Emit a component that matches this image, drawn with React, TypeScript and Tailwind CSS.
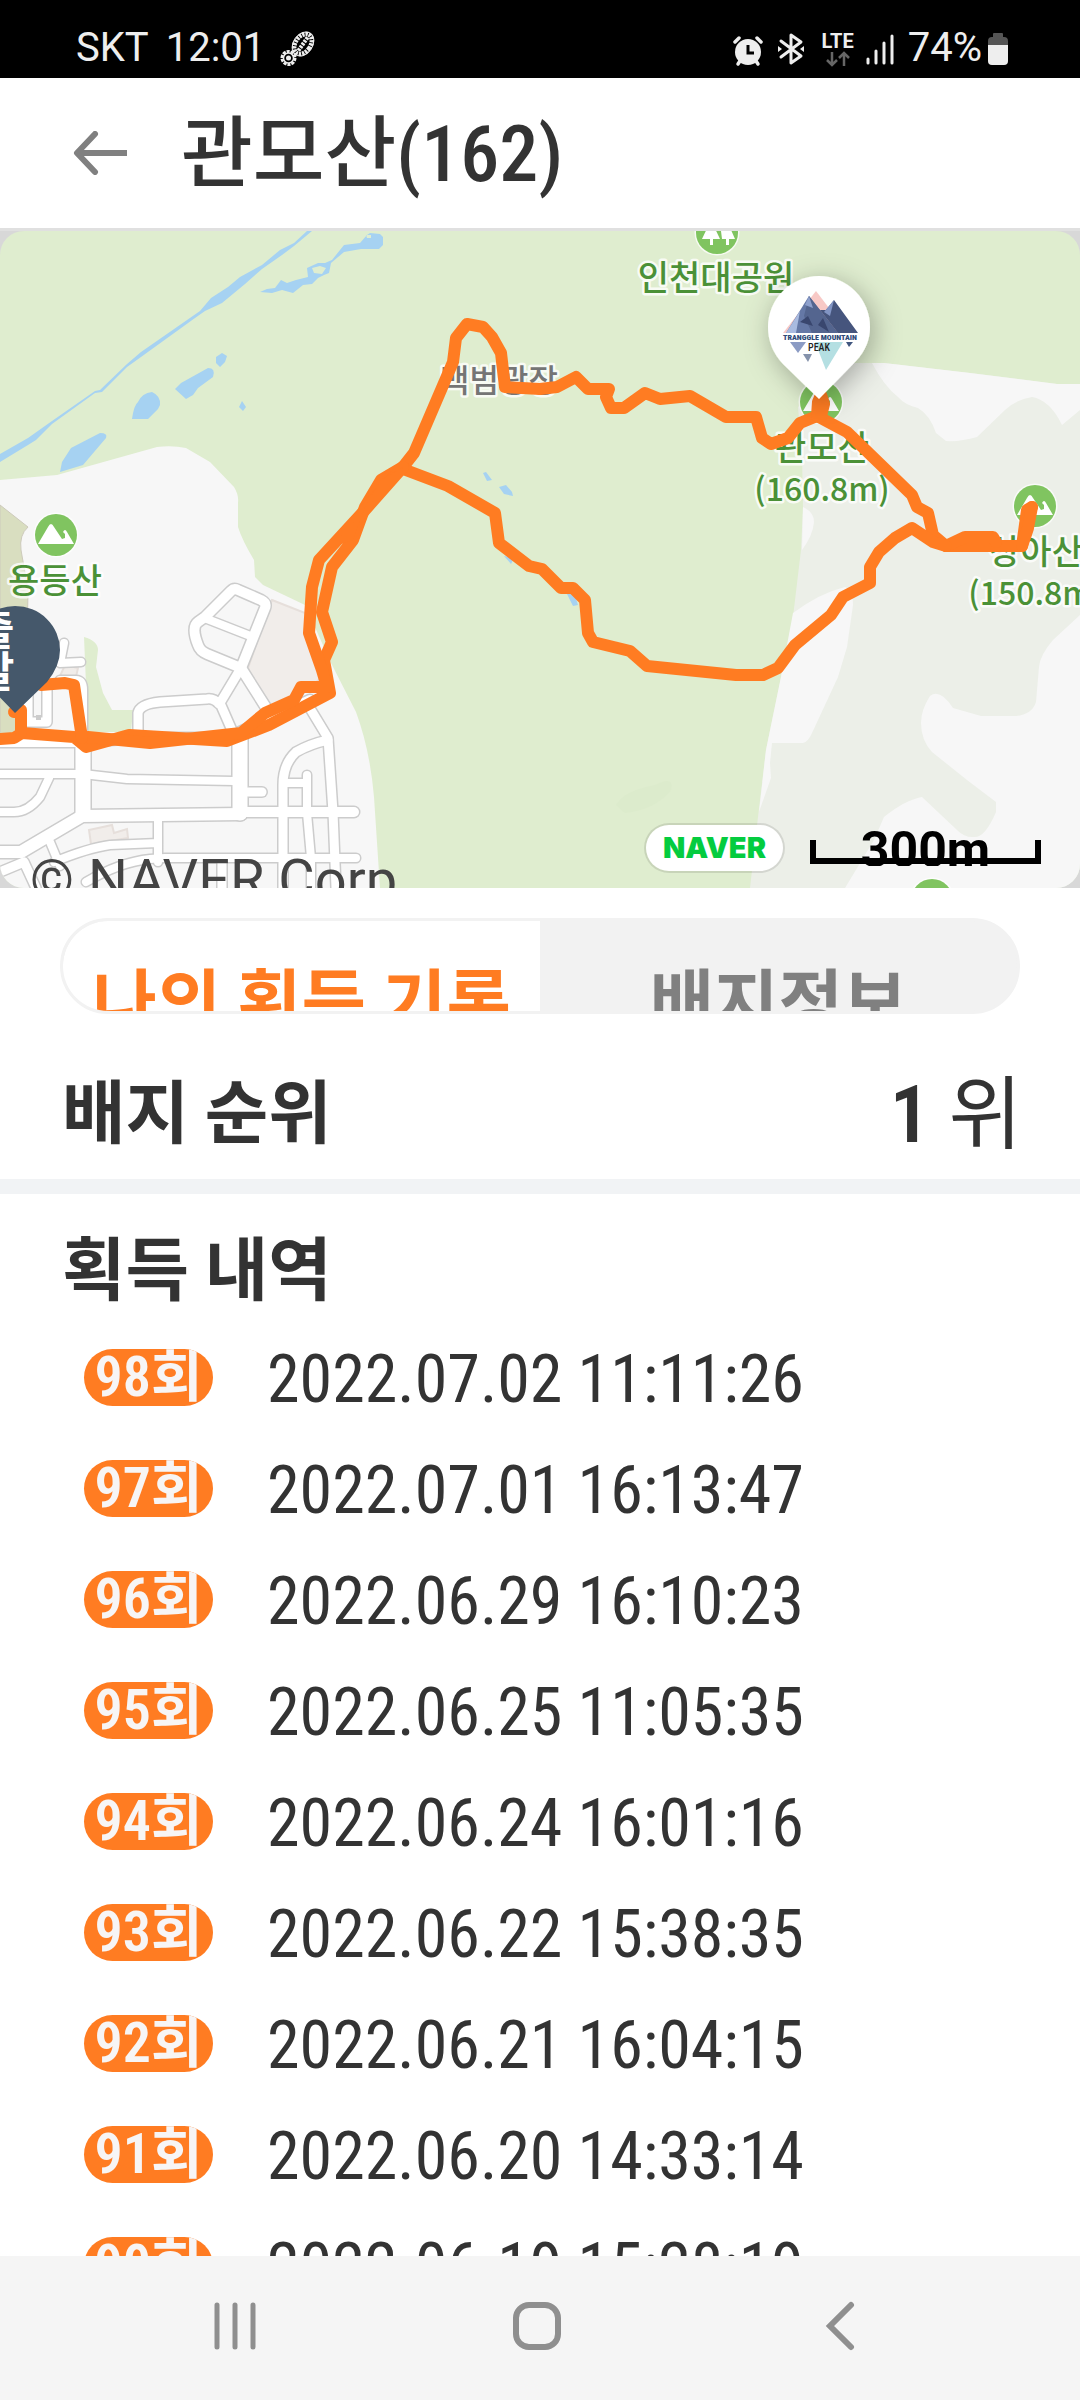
import type { ReactNode } from 'react';

const ORANGE = '#ff7c22';

const records = [
  { count: 98, date: '2022.07.02 11:11:26' },
  { count: 97, date: '2022.07.01 16:13:47' },
  { count: 96, date: '2022.06.29 16:10:23' },
  { count: 95, date: '2022.06.25 11:05:35' },
  { count: 94, date: '2022.06.24 16:01:16' },
  { count: 93, date: '2022.06.22 15:38:35' },
  { count: 92, date: '2022.06.21 16:04:15' },
  { count: 91, date: '2022.06.20 14:33:14' },
  { count: 90, date: '2022.06.19 15:28:19' },
];

function FootprintIcon() {
  return (
    <svg viewBox="0 0 36 36" className="h-9 w-9" aria-hidden="true">
      <g transform="rotate(35 23 13)" fill="none" stroke="#eee">
        <ellipse cx="23" cy="13" rx="7.5" ry="11" strokeWidth="4.5" strokeDasharray="2.4 0.9" />
        <ellipse cx="23" cy="13" rx="9.6" ry="13" strokeWidth="1" />
        <path d="M23 5v17" strokeWidth="4" strokeDasharray="2.4 1" />
      </g>
      <circle cx="8.500" cy="27" r="6.500" fill="none" stroke="#eee" strokeWidth="3" strokeDasharray="3 1" />
      <circle cx="8.500" cy="27" r="5" fill="none" stroke="#eee" strokeWidth="1.500" />
      <circle cx="8.500" cy="27" r="2.500" fill="#eee" />
    </svg>
  );
}

function AlarmIcon() {
  return (
    <svg viewBox="0 0 30 32" className="h-8 w-[30px]" aria-hidden="true">
      <g stroke="#eee" strokeLinecap="round" strokeWidth="3.500">
        <path d="M2 7l4-4M28 7l-4-4" />
        <path d="M5 29l2-3M25 29l-2-3" />
      </g>
      <circle cx="15" cy="17" r="13" fill="#eee" />
      <path d="M15 10v8h6" fill="none" stroke="#000" strokeWidth="3" />
    </svg>
  );
}

function BluetoothIcon() {
  return (
    <svg viewBox="0 0 28 34" className="h-[34px] w-7" aria-hidden="true">
      <path
        d="M4 9l20 15-10 7V3l10 7L4 25"
        fill="none"
        stroke="#eee"
        strokeWidth="3"
        strokeLinejoin="round"
        strokeLinecap="round"
      />
      <path d="M1 14v6l4-3zM27 14v6l-4-3z" fill="#eee" />
    </svg>
  );
}

function SignalIcon() {
  return (
    <svg viewBox="0 0 28 32" className="h-8 w-7" aria-hidden="true">
      <path d="M2 26v4M10 18v12M18 10v20M26 3v27" stroke="#eee" strokeWidth="3" strokeLinecap="round" />
    </svg>
  );
}

function BatteryIcon() {
  return (
    <svg viewBox="0 0 20 32" className="h-8 w-5" aria-hidden="true">
      <path d="M5 1q0-1 1-1h8q1 0 1 1v3h1q4 0 4 4v5H0V8q0-4 4-4h1z" fill="#555" />
      <path d="M0 12h20v16q0 4-4 4H4q-4 0-4-4z" fill="#eee" />
    </svg>
  );
}

function StatusBar() {
  return (
    <div className="flex h-[78px] shrink-0 items-end bg-black pr-[72px] pb-[7px] pl-[76px] font-['Roboto',sans-serif] text-[40px] leading-[46px] text-[#eee]">
      <span>SKT</span>
      <span className="ml-[17px]">12:01</span>
      <span className="ml-[15px] pb-1">
        <FootprintIcon />
      </span>
      <span className="ml-auto pb-1">
        <AlarmIcon />
      </span>
      <span className="ml-[14px] pb-[5px]">
        <BluetoothIcon />
      </span>
      <span className="ml-4 flex flex-col items-center pb-1">
        <span className="text-[20px] leading-[20px] font-bold">LTE</span>
        <svg viewBox="0 0 24 16" className="h-4 w-6" aria-hidden="true">
          <path
            d="M6 1v13M1 9l5 5 5-5M18 15V2M13 7l5-5 5 5"
            fill="none"
            stroke="#666"
            strokeWidth="2.500"
          />
        </svg>
      </span>
      <span className="ml-3 pb-[6px]">
        <SignalIcon />
      </span>
      <span className="ml-[14px]">74%</span>
      <span className="ml-[6px] pb-[6px]">
        <BatteryIcon />
      </span>
    </div>
  );
}

function PeakIcon({ x, y }: { x: number; y: number }) {
  return (
    <g transform={`translate(${x} ${y})`}>
      <circle r="22.500" fill="#fff" opacity="0.700" />
      <circle r="21" fill="#80c460" />
      <path d="M-18 9L-8-8q3-6 6 0L6 4l3-1V-1l-2-2q2-4 4 0L18 9z" fill="#fff" />
    </g>
  );
}

function MapLabel({
  x,
  y,
  size = 34,
  color = '#4b9137',
  children,
}: {
  x: number;
  y: number;
  size?: number;
  color?: string;
  children: ReactNode;
}) {
  return (
    <text
      x={x}
      y={y}
      textAnchor="middle"
      fontSize={size}
      fontWeight="500"
      fill={color}
      stroke="#fff"
      strokeOpacity="0.800"
      strokeWidth="5"
      strokeLinejoin="round"
      paintOrder="stroke"
      className="font-['Noto_Sans_CJK_KR',sans-serif]"
    >
      {children}
    </text>
  );
}

const roads = [
  { w: 10, d: 'M205 617L231 591Q234 588 238 590L261 600Q267 603 265 608L241 668L207 654Q200 651 198 645Q191 627 198 622Z' },
  { w: 8, d: 'M207 619L253 637' },
  { w: 9, d: 'M241 668L220 703L234 735M138 735V713Q140 704 160 702L207 699Q214 698 219 704' },
  { w: 10, d: 'M241 668L272 717' },
  { w: 9, d: 'M308 705L328 738L333 812L336 888' },
  { w: 9, d: 'M328 740Q310 744 296 752Q283 764 283 785V888' },
  { w: 8, d: 'M307 775V813L311 858V888M285 783H307' },
  { w: 10, d: 'M0 742H78L140 738H227L262 722L310 700' },
  { w: 8, d: 'M0 774H83L127 779L234 781' },
  { w: 12, d: 'M0 852H21L82 816L241 814' },
  { w: 10, d: 'M241 812H354' },
  { w: 15, d: 'M83 745V813M240 738V813' },
  { w: 9, d: 'M248 792H262' },
  { w: 8, d: 'M49 778L40 797Q28 812 14 812H0' },
  { w: 8, d: 'M158 820V862M54 862Q88 848 110 845L158 843M50 842L60 866' },
  { w: 8, d: 'M86 882Q120 862 150 859L165 858H356' },
  { w: 9, d: 'M0 872L24 862L36 888M222 860V888' },
  { w: 8, d: 'M64 643L60 663L81 662M60 680H76Q83 680 83 690V740' },
  { w: 9, d: 'M47 690V722H28V695' },
];

const routes = [
  'M403 467L414 453L453 362L456 338L467 324L483 327L492 337L501 353L505 387L540 389L557 387L576 377L588 389H609L606 397L611 408H624L645 393L660 399L690 396L726 417H756L762 438L771 444L788 438L800 423L817 416L847 432L912 495L917 507L928 513L933 535L946 546H1022L1027 510L1032 507',
  'M817 416L818 402L821 395L824 404L821 416',
  'M946 546L965 537H993L996 542',
  'M1022 546L1028 528L1032 507',
  'M946 546L933 542L912 528L895 538L879 552L870 567V583L843 597L831 615L795 645L778 668L763 675H736L647 666L630 651L593 642L588 633L585 600L573 588H561L542 569L529 566L499 543L495 513L448 486L403 469',
  'M403 467L381 480L365 507L353 540L332 567L322 612L332 642L324 660L330 693L269 725L227 741L129 735L86 747L74 737L22 733L14 738L0 739',
  'M403 467L365 510L319 560L312 587L309 633L322 670L327 687H301L294 700L265 713L241 733L150 743L88 737',
  'M82 738L74 685L65 683L41 685M21 733V710L14 712',
];

function PinLogo() {
  return (
    <g>
      <path d="M783 333L816 291L848 333z" fill="#f8c9c6" />
      <path d="M786 333L809 296L838 333z" fill="#6578a6" />
      <path d="M786 333L800 311L796 333z" fill="#a9bbe0" />
      <path d="M809 296L838 333H812L804 316z" fill="#54658f" />
      <path d="M820 310L826 310L834 300L858 333H838z" fill="#46557d" />
      <path d="M834 300L830 316L824 312z" fill="#8295c4" />
      <path d="M809 296L813 308L805 305z" fill="#8ea0cc" />
      <path d="M800 322l8-6 5 10zM818 325l5-7 6 14z" fill="#39466e" />
      <path d="M790 342h16l-8 11z" fill="#8b9bc4" />
      <path d="M803 354h9l-4 8z" fill="#8592ab" />
      <path d="M815 342h28l-17 28z" fill="#b4dfe2" />
      <path d="M846 342h7l-4 5z" fill="#41577f" />
      <text
        x="820"
        y="340"
        textAnchor="middle"
        fontSize="8"
        fontWeight="900"
        fill="#2f4a78"
        className="font-['Roboto_Condensed',sans-serif]"
      >
        TRANGGLE MOUNTAIN
      </text>
      <text
        x="819"
        y="351"
        textAnchor="middle"
        fontSize="10"
        fontWeight="500"
        fill="#222"
        className="font-['Roboto_Condensed',sans-serif]"
      >
        PEAK
      </text>
    </g>
  );
}

function TrailMap() {
  return (
    <section
      aria-label="관모산 지도"
      className="relative aspect-[1080/657] w-full shrink-0 overflow-hidden bg-[#d8d8d8]"
    >
      <svg
        viewBox="0 231 1080 657"
        preserveAspectRatio="xMidYMid slice"
        className="block h-full w-full rounded-[24px]"
        role="img"
        aria-label="등산 경로"
      >
        <defs>
          <filter id="pinShadow" x="-60%" y="-60%" width="220%" height="220%">
            <feDropShadow dx="4" dy="6" stdDeviation="14" floodColor="#000" floodOpacity="0.300" />
          </filter>
        </defs>
        <rect y="231" width="1080" height="657" fill="#dfedcf" />

        <path
          d="M0 480L57 475L157 447Q172 445 186 448L210 462L234 487Q239 495 238 503V527Q242 540 254 560L255 577L263 585L305 605L331 663L356 712Q370 750 374 797L380 888H0z"
          fill="#f7f7f7"
        />
        <path
          d="M0 505L28 527Q19 535 21 550L28 590L26 700L15 740H0z"
          fill="#d9dec0"
          stroke="#cdcabb"
          strokeWidth="1"
        />
        <path d="M84 637Q98 641 98 650L96 667L103 693L112 710L133 710L131 732H88z" fill="#dfedcf" />
        <path d="M272 600L305 613L322 677L296 700L268 713L248 668z" fill="#f1edea" stroke="#e6dfdb" strokeWidth="2" />
        <path d="M89 830L112 825L114 833L127 829L128 838L91 844zM65 665L78 668L76 677L60 676z" fill="#f1edea" stroke="#e6dfdb" strokeWidth="2" />

        <g fill="#a6d2f2">
          <path d="M0 454L28 438L52 421L95 391L100 390L127 364L141 352L200 311L211 298L228 287L240 277L262 265L280 250L294 243L307 231H312L294 246L282 255L262 269L245 284L222 303L205 311L195 318L141 357L127 367L102 392L95 393L52 424L36 440L28 445L0 462z" />
          <path
            fillRule="evenodd"
            d="M260 292L267 289L275 288L281 280L287 283L296 280L308 277L307 268L318 263L325 263L332 260L344 245L360 243L367 235L370 233L380 234L383 237V245L379 249H361L344 252L331 263L329 273L324 275L318 278L312 284L303 285L293 293L282 290L272 293zM312 268L320 266L326 268L322 274L314 273zM366 235L371 235L371 238L367 238z"
          />
          <path d="M216 357L222 353L227 356L225 362L220 367L216 363zM175 389L181 383L208 368Q216 368 213 377L198 388L193 395L186 399zM132 419Q134 405 138 402Q142 393 152 392Q161 396 160 405L158 409L148 419zM242 401L246 407L243 411L239 407zM60 472L62 462L71 448L100 433Q108 433 106 438L83 465z" />
          <path d="M483 473L486 472L492 480L487 481zM499 487L506 485L512 492L513 496L504 494zM504 556l10 2-3 6zM566 592l8 0 4 13-5 1z" />
        </g>

        <path
          d="M850 363H884L970 373L1057 384H1080V888H750L758 817L766 750L781 677L793 617L801 550L803 507L802 453L798 407z"
          fill="#ecefe8"
        />
        <g fill="#f7f7f7">
          <path d="M872 363H884L970 373L1057 384H1080V410L1062 425Q1050 400 1032 397Q1015 400 1005 410L977 437Q960 442 946 441L936 433Q930 415 918 408Q905 405 898 397Q884 386 872 363z" />
          <path d="M803 507Q814 512 814 522Q813 535 802 550z" />
          <path d="M845 587Q820 593 793 613L781 677L766 750L759 812L771 778L770 763L772 743H803Q808 742 812 733L838 677L847 647L853 605Q853 590 845 587z" />
          <path d="M1080 615L1053 640Q1040 655 1039 667L1036 702Q1032 715 1015 716H981L953 708Q940 688 930 696Q921 710 921 723Q921 740 932 752L967 780L996 802V812Q985 838 974 837Q965 838 957 830L922 797Q905 800 884 817L874 840L845 888H1080z" />
        </g>
        <path d="M616 805Q625 790 655 785Q675 775 671 790Q655 810 625 813z" fill="#dcebcc" />

        <g fill="none" strokeLinejoin="round" strokeLinecap="round">
          {roads.map((r) => (
            <path key={`casing-${r.d}`} d={r.d} stroke="#cccccc" strokeWidth={r.w + 3} />
          ))}
          {roads.map((r) => (
            <path key={r.d} d={r.d} stroke="#fff" strokeWidth={r.w} />
          ))}
        </g>
        <rect x="36" y="715" width="5" height="5" fill="#ccc" />

        <PeakIcon x={56} y={535} />
        <PeakIcon x={821} y={402} />
        <PeakIcon x={1035} y={506} />
        <PeakIcon x={932} y={900} />
        <circle cx="717" cy="233" r="22.500" fill="#fff" opacity="0.700" />
        <circle cx="717" cy="233" r="21" fill="#80c460" />
        <path d="M702 239L711 220L720 239h-7v6h-3v-6zM721 231h2l5-8 7 16h-6v6h-3v-6h-4z" fill="#fff" />

        <MapLabel x={716} y={290}>인천대공원</MapLabel>
        <MapLabel x={55} y={593}>용등산</MapLabel>
        <MapLabel x={822} y={460}>관모산</MapLabel>
        <MapLabel x={822} y={501} size={32}>(160.8m)</MapLabel>
        <MapLabel x={1036} y={564}>상아산</MapLabel>
        <MapLabel x={1036} y={605} size={32}>(150.8m)</MapLabel>
        <MapLabel x={499} y={392} size={32} color="#757575">백범광장</MapLabel>

        <g fill="none" stroke={ORANGE} strokeWidth="12" strokeLinejoin="round" strokeLinecap="round">
          {routes.map((d) => (
            <path key={d} d={d} />
          ))}
        </g>
        <path d="M365 507L381 480L403 467L365 510L330 548L353 540z" fill={ORANGE} />

        <path d="M15 713L-15 682Q-30 668 -30 650A45 44 0 0 1 60 650Q60 666 47 682z" fill="#45586b" />
        <text
          fontSize="42"
          fontWeight="700"
          fill="#fff"
          textAnchor="middle"
          className="font-['Noto_Sans_CJK_KR',sans-serif]"
        >
          <tspan x="-5" y="645">출</tspan>
          <tspan x="-5" y="687">발</tspan>
        </text>

        <path
          d="M819 399L783 364Q768 348 768 327A51 51 0 0 1 870 327Q870 346 856 361z"
          fill="#fff"
          filter="url(#pinShadow)"
        />
        <PinLogo />
      </svg>

      <p className="absolute -bottom-6 left-[30px] font-['Roboto',sans-serif] text-[56px] leading-[64px] whitespace-nowrap text-[#444]">
        © NAVER Corp.
      </p>
      <a
        href="#naver"
        className="absolute right-[295px] bottom-[15px] flex h-[50px] w-[141px] items-center justify-center rounded-full border-2 border-black/10 bg-white bg-clip-padding font-['Inter',sans-serif] text-[29px] font-black text-[#04cc3f]"
      >
        NAVER
      </a>
      <div className="absolute right-[39px] bottom-6 h-[24px] w-[231px] border-6 border-t-0 border-black text-center">
        <span className="absolute inset-x-0 -top-3 h-[38px] overflow-hidden font-['Roboto',sans-serif] text-[50px] leading-[44px] font-bold text-black">
          300m
        </span>
      </div>
    </section>
  );
}

export default function App() {
  return (
    <div className="flex h-screen flex-col overflow-hidden bg-white font-['Roboto_Condensed','Noto_Sans_CJK_KR',sans-serif] text-[#333]">
      <StatusBar />

      <header className="flex h-[153px] shrink-0 items-center border-b-3 border-[#e0e0e0] pl-[73px]">
        <button type="button" aria-label="뒤로" className="h-[44px] w-[54px]">
          <svg viewBox="0 0 54 44" className="h-full w-full" aria-hidden="true">
            <path d="M22 3L4 22L22 41" fill="none" stroke="#808080" strokeWidth="6" strokeLinecap="round" strokeLinejoin="round" />
            <path d="M4 22H54" stroke="#808080" strokeWidth="6" />
          </svg>
        </button>
        <h1 className="ml-[54px] pt-1 text-[78px] leading-[100px] font-medium">관모산(162)</h1>
      </header>

      <main className="flex min-h-0 flex-1 flex-col overflow-hidden">
        <TrailMap />

        <div
          role="tablist"
          className="mx-[60px] mt-[30px] flex h-24 shrink-0 overflow-hidden rounded-full border-3 border-[#f2f2f2] bg-[#f2f2f2] text-[70px] leading-[100px] font-bold"
        >
          <button
            type="button"
            role="tab"
            aria-selected="true"
            className="h-[138px] flex-1 overflow-hidden rounded-l-[45px] bg-white pt-7 whitespace-nowrap text-[#ff7c22]"
          >
            나의 획득 기록
          </button>
          <button
            type="button"
            role="tab"
            aria-selected="false"
            className="h-[138px] flex-1 pt-7 whitespace-nowrap text-[#808080]"
          >
            배지정보
          </button>
        </div>

        <section className="flex h-[180px] shrink-0 items-center justify-between border-b-15 border-[#f1f3f5] pr-[58px] pl-[62px] pt-9">
          <h2 className="text-[69px] leading-[100px] font-bold">배지 순위</h2>
          <p className="text-[80px] leading-[100px]">
            <strong className="font-semibold">1</strong> 위
          </p>
        </section>

        <section className="shrink-0">
          <h2 className="px-[62px] pt-7 text-[69px] leading-[100px] font-bold">획득 내역</h2>
          <ol>
            {records.map((r) => (
              <li key={r.count} className="flex h-[111px] items-center pl-[84px]">
                <span className="flex h-[57px] w-[129px] items-center justify-center overflow-hidden rounded-full bg-[#ff7c22] text-[56px] leading-[57px] font-semibold text-[#f7f5f5]">
                  {r.count}회
                </span>
                <time className="ml-[54px] pt-1 text-[66px] leading-[80px]">{r.date}</time>
              </li>
            ))}
          </ol>
        </section>
      </main>

      <nav className="flex h-[144px] shrink-0 items-center justify-between bg-[#f5f5f5] pr-[217px] pb-[5px] pl-[210px]">
        <button type="button" aria-label="최근 앱">
          <svg viewBox="0 0 50 50" className="h-[50px] w-[50px]" aria-hidden="true">
            <path d="M7 4v42M25 4v42M43 4v42" stroke="#8f8f8f" strokeWidth="5" strokeLinecap="round" />
          </svg>
        </button>
        <button type="button" aria-label="홈">
          <svg viewBox="0 0 50 50" className="h-[50px] w-[50px]" aria-hidden="true">
            <rect x="4" y="4" width="42" height="42" rx="13" fill="none" stroke="#8f8f8f" strokeWidth="6" />
          </svg>
        </button>
        <button type="button" aria-label="이전">
          <svg viewBox="0 0 50 50" className="h-[50px] w-[50px]" aria-hidden="true">
            <path d="M38 4L17 25L38 46" fill="none" stroke="#8f8f8f" strokeWidth="6" strokeLinecap="round" />
          </svg>
        </button>
      </nav>
    </div>
  );
}
